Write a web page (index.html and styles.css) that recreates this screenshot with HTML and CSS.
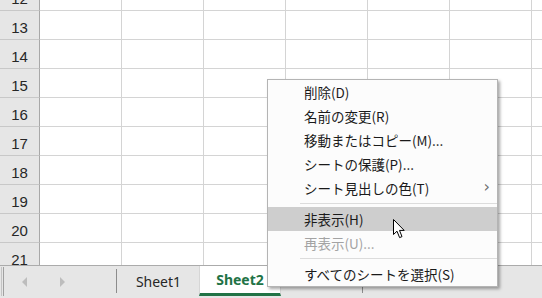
FILE: index.html
```html
<!DOCTYPE html>
<html>
<head>
    <meta charset="UTF-8">
    <title>Sheet tab menu</title>
    <link rel="stylesheet" href="styles.css">
</head>

<body>
    <div class="sheet">
        <div class="rows">
            <div class="row"><div class="rh">12</div><div class="c"></div><div class="c"></div><div class="c"></div><div class="c"></div><div class="c"></div><div class="c"></div><div class="c"></div></div>
            <div class="row"><div class="rh">13</div><div class="c"></div><div class="c"></div><div class="c"></div><div class="c"></div><div class="c"></div><div class="c"></div><div class="c"></div></div>
            <div class="row"><div class="rh">14</div><div class="c"></div><div class="c"></div><div class="c"></div><div class="c"></div><div class="c"></div><div class="c"></div><div class="c"></div></div>
            <div class="row"><div class="rh">15</div><div class="c"></div><div class="c"></div><div class="c"></div><div class="c"></div><div class="c"></div><div class="c"></div><div class="c"></div></div>
            <div class="row"><div class="rh">16</div><div class="c"></div><div class="c"></div><div class="c"></div><div class="c"></div><div class="c"></div><div class="c"></div><div class="c"></div></div>
            <div class="row"><div class="rh">17</div><div class="c"></div><div class="c"></div><div class="c"></div><div class="c"></div><div class="c"></div><div class="c"></div><div class="c"></div></div>
            <div class="row"><div class="rh">18</div><div class="c"></div><div class="c"></div><div class="c"></div><div class="c"></div><div class="c"></div><div class="c"></div><div class="c"></div></div>
            <div class="row"><div class="rh">19</div><div class="c"></div><div class="c"></div><div class="c"></div><div class="c"></div><div class="c"></div><div class="c"></div><div class="c"></div></div>
            <div class="row"><div class="rh">20</div><div class="c"></div><div class="c"></div><div class="c"></div><div class="c"></div><div class="c"></div><div class="c"></div><div class="c"></div></div>
            <div class="row"><div class="rh">21</div><div class="c"></div><div class="c"></div><div class="c"></div><div class="c"></div><div class="c"></div><div class="c"></div><div class="c"></div></div>
        </div>
    </div>

    <div class="tabbar">
        <div class="edge"></div>
        <div class="nav">
            <span class="arrow left"></span>
            <span class="arrow right"></span>
        </div>
        <div class="sep"></div>
        <div class="tab">Sheet1</div>
        <div class="tab active">Sheet2</div>
        <div class="gap"></div>
        <div class="sep"></div>
    </div>

    <!-- シート見出しの右クリックメニュー -->
    <div class="menu">
        <div class="item">削除(D)</div>
        <div class="item">名前の変更(R)</div>
        <div class="item">移動またはコピー(M)...</div>
        <div class="item">シートの保護(P)...</div>
        <div class="item sub">シート見出しの色(T)<span class="chev">›</span></div>
        <div class="divider"></div>
        <div class="item hover">非表示(H)</div>
        <div class="item disabled">再表示(U)...</div>
        <div class="divider"></div>
        <div class="item">すべてのシートを選択(S)</div>
    </div>

    <svg class="cursor" width="13" height="20" viewBox="0 0 13 20">
        <path d="M0.5 0.5 L0.5 15.5 L4 12.2 L6.6 18.6 L9 17.6 L6.5 11.4 L11.2 11.4 Z" fill="#fff" stroke="#000" stroke-width="1" stroke-linejoin="miter"/>
    </svg>
</body>
</html>
```

FILE: styles.css
```css
body { margin: 0; width: 542px; height: 298px; overflow: hidden; background: #fff; position: relative; }

.sheet { height: 265px; overflow: hidden; }
.rows { margin-top: -18px; }
.row { display: flex; height: 29px; }
.rh {
    flex: 0 0 40px;
    box-sizing: border-box;
    border-right: 1px solid #a8a8a8;
    border-bottom: 1px solid #c8c8c8;
    background: #e6e6e6;
    color: #262626;
    font: 15px "Liberation Sans", Arial, sans-serif;
    display: flex;
    justify-content: center;
    align-items: flex-end;
    padding-bottom: 3px;
}
.c {
    flex: 0 0 82px;
    box-sizing: border-box;
    border-right: 1px solid #d4d4d4;
    border-bottom: 1px solid #d4d4d4;
}

.tabbar {
    display: flex;
    height: 32px;
    border-top: 1px solid #ababab;
    background: #e6e6e6;
    font: 14px "Noto Sans", sans-serif;
    color: #262626;
}
.edge {
    width: 1px;
    margin: 1px 0 2px 1px;
    border-left: 1px solid #c4c4c4;
    border-right: 1px solid #a0a0a0;
}
.nav { width: 112px; display: flex; align-items: center; padding-left: 18px; gap: 33px; box-sizing: border-box; }
.arrow { width: 0; height: 0; border-top: 5px solid transparent; border-bottom: 5px solid transparent; }
.arrow.left { border-right: 5px solid #bdbdbd; }
.arrow.right { border-left: 5px solid #bdbdbd; }
.sep { width: 1px; background: #8c8c8c; margin: 3px 0 5px; }
.tab { width: 81px; display: flex; justify-content: center; align-items: center; padding-left: 1px; padding-bottom: 2px; }
.tab.active {
    width: 80px;
    background: #fff;
    color: #217346;
    font-weight: bold;
    border-left: 1px solid #d6d6d6;
    border-right: 1px solid #d6d6d6;
    border-bottom: 3px solid #217346;
    margin-bottom: 2px;
    padding: 0;
}
.gap { width: 81px; }

.menu {
    position: absolute;
    left: 267px;
    top: 79px;
    width: 229px;
    background: #fcfcfc;
    border: 1px solid #b4b4b4;
    box-shadow: 2px 2px 3px rgba(0,0,0,0.35);
    font: 13.5px "Noto Sans CJK JP", sans-serif;
    color: #1a1a1a;
}
.item { height: 24px; line-height: 24px; padding-left: 36px; position: relative; white-space: nowrap; }
.item.hover { background: #cecece; }
.item.disabled { color: #a3a3a3; }
.chev { position: absolute; right: 7px; top: 0; color: #707070; font: 16px "DejaVu Sans", sans-serif; line-height: 22px; }
.divider { height: 1px; background: #dcdcdc; margin: 3px 0 3px 32px; }

.cursor { position: absolute; left: 393px; top: 219px; }
```
